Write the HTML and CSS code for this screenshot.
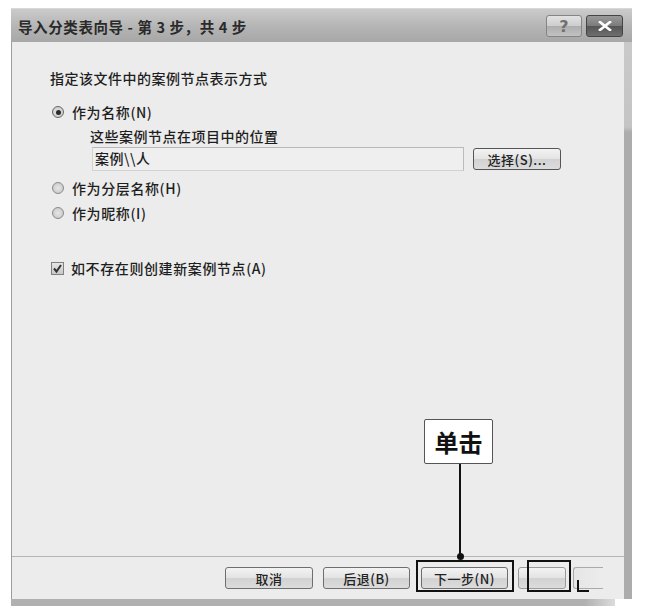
FILE: index.html
```html
<!DOCTYPE html>
<html lang="zh">
<head>
<meta charset="utf-8">
<link rel="stylesheet" href="styles.css">
</head>
<body>
<div class="window">
  <div class="titlebar">
    <span class="title">导入分类表向导 - 第 3 步，共 4 步</span>
    <div class="tbtns">
      <span class="tbtn help">?</span>
      <span class="tbtn close">
        <svg width="14" height="10" viewBox="0 0 14 10"><path d="M2 1 L12 9 M12 1 L2 9" stroke="#fff" stroke-width="2.6" stroke-linecap="square"/></svg>
      </span>
    </div>
  </div>
  <div class="frame">
    <div class="client">
      <div class="content">
        <div class="heading">指定该文件中的案例节点表示方式</div>
        <div class="opt first"><span class="radio on"></span><span>作为名称(N)</span></div>
        <div class="sublabel">这些案例节点在项目中的位置</div>
        <div class="fieldrow">
          <div class="field">案例\\人</div>
          <span class="btn sel">选择(S)...</span>
        </div>
        <div class="opt second"><span class="radio"></span><span>作为分层名称(H)</span></div>
        <div class="opt third"><span class="radio"></span><span>作为昵称(I)</span></div>
        <div class="opt check"><span class="checkbox">
          <svg width="11" height="11" viewBox="0 0 11 11"><path d="M2 5.5 L4.5 8.5 L9 2" fill="none" stroke="#333" stroke-width="2"/></svg>
        </span><span>如不存在则创建新案例节点(A)</span></div>
      </div>
      <div class="footer">
        <span class="btn">取消</span>
        <span class="btn">后退(B)</span>
        <span class="btn">下一步(N)</span>
        <span class="btn finish"></span>
        <span class="btn part"></span>
      </div>
    </div>
    <div class="rframe"></div>
  </div>
  <div class="bframe"></div>
</div>

<div class="callout">单击</div>
<div class="leader"></div>
<div class="dot"></div>
<div class="hl hl-next"></div>
<div class="hl hl-finish"></div>
<div class="corner"></div>
</body>
</html>
```

FILE: styles.css
```css
html, body {
  margin: 0;
  padding: 0;
  background: #ffffff;
}
body {
  width: 650px;
  height: 615px;
  position: relative;
  overflow: hidden;
  font-family: "Noto Sans CJK SC", "Noto Sans", sans-serif;
  color: #1e1e1e;
}
.window {
  margin: 8px 0 0 11px;
  width: 621px;
}
.titlebar {
  height: 34px;
  display: flex;
  align-items: center;
  justify-content: space-between;
  padding-left: 7px;
  background: linear-gradient(to bottom, #cbcbcb 0%, #b4b4b4 55%, #a7a7a7 100%);
  border-top: 1px solid #d8d8d8;
  box-sizing: border-box;
}
.title {
  font-size: 14.5px;
  font-weight: 700;
  color: #2a2a2a;
  letter-spacing: 0.6px;
  margin-top: 2px;
}
.tbtns {
  display: flex;
  gap: 4px;
  padding-right: 9px;
  margin-top: 1px;
}
.tbtn {
  width: 36px;
  height: 22px;
  box-sizing: border-box;
  border-radius: 3px;
  display: flex;
  align-items: center;
  justify-content: center;
}
.help {
  border: 1px solid #858585;
  background: linear-gradient(to bottom, #e2e2e2 0%, #cdcdcd 50%, #adadad 51%, #c2c2c2 100%);
  font-family: "DejaVu Sans", sans-serif;
  font-weight: 700;
  font-size: 16px;
  color: #707070;
}
.close {
  width: 37px;
  border: 1px solid #444;
  background: linear-gradient(to bottom, #9a9a9a 0%, #7a7a7a 50%, #555 51%, #6e6e6e 100%);
}
.frame {
  display: flex;
}
.client {
  width: 613px;
  background: #ececec;
  border-left: 1px solid #9c9c9c;
  box-sizing: border-box;
}
.rframe {
  width: 8px;
  background: linear-gradient(to bottom, #c9c9c9 0px, #c4c4c4 85px, #acacac 90px, #acacac 100%);
}
.content {
  height: 514px;
  padding: 26px 0 0 38px;
  box-sizing: border-box;
  font-size: 14px;
  font-weight: 500;
}
.heading {
  height: 20px;
  line-height: 20px;
  letter-spacing: 0.5px;
}
.opt {
  display: flex;
  align-items: center;
  height: 20px;
  line-height: 20px;
  letter-spacing: 0.6px;
}
.opt.first { margin-top: 14px; }
.opt.second { margin-top: 7px; }
.opt.third { margin-top: 5px; }
.opt.check { margin-top: 35px; }
.radio {
  width: 12px;
  height: 12px;
  box-sizing: border-box;
  border-radius: 50%;
  border: 1px solid #8a8a8a;
  background: radial-gradient(circle, #e6e6e6 0%, #c4c4c4 100%);
  margin: 0 8px 0 2px;
  position: relative;
  flex: none;
}
.radio.on {
  border-color: #666;
}
.radio.on::after {
  content: "";
  position: absolute;
  left: 2.5px;
  top: 2.5px;
  width: 5px;
  height: 5px;
  border-radius: 50%;
  background: #2a2a2a;
}
.checkbox {
  width: 13px;
  height: 13px;
  box-sizing: border-box;
  border: 1px solid #808080;
  background: linear-gradient(to bottom, #e6e6e6, #c8c8c8);
  margin: 0 7px 0 1px;
  display: flex;
  align-items: center;
  justify-content: center;
  flex: none;
}
.sublabel {
  margin: 4px 0 0 40px;
  height: 20px;
  line-height: 20px;
  letter-spacing: 0.5px;
}
.fieldrow {
  display: flex;
  align-items: center;
  margin: 1px 0 0 42px;
}
.field {
  width: 372px;
  height: 24px;
  box-sizing: border-box;
  border: 1px solid #d2d2d2;
  border-top-color: #b8b8b8;
  border-right-color: #bcbcbc;
  background: #efefef;
  line-height: 21px;
  padding-left: 2px;
  font-size: 14px;
  letter-spacing: 0.5px;
}
.btn {
  height: 22px;
  box-sizing: border-box;
  border: 1px solid #6e6e6e;
  border-radius: 3px;
  background: linear-gradient(to bottom, #f3f3f3 0%, #e4e4e4 48%, #d2d2d2 52%, #dcdcdc 100%);
  display: flex;
  align-items: center;
  justify-content: center;
  font-size: 13px;
  font-weight: 500;
  letter-spacing: 0.5px;
  color: #222;
  width: 87px;
  flex: none;
}
.btn.sel {
  margin-left: 9px;
  width: 88px;
  height: 22px;
  border-color: #555;
}
.footer {
  height: 43px;
  border-top: 1px solid #b4b4b4;
  box-sizing: border-box;
  display: flex;
  gap: 10px;
  padding: 10px 0 0 213px;
  overflow: hidden;
}
.footer .btn:first-child { width: 88px; }
.footer .btn:nth-child(3) { margin-left: 1px; }
.btn.finish {
  width: 48px;
  border-color: #9a9a9a;
}
.btn.part {
  width: 30px;
  margin-left: -3px;
  border-color: #aaa;
  border-right: none;
  border-radius: 3px 0 0 3px;
  background: linear-gradient(to right, #e6e6e6, #ececec);
}
.bframe {
  width: 604px;
  height: 7px;
  background: linear-gradient(to right, #b0b0b0 0%, #b0b0b0 95%, #dcdcdc 100%);
}
.callout {
  position: absolute;
  left: 424px;
  top: 419px;
  width: 69px;
  height: 45px;
  box-sizing: border-box;
  border: 1px solid #555;
  border-radius: 2px;
  background: #fff;
  font-size: 24px;
  font-weight: 700;
  color: #111;
  display: flex;
  align-items: center;
  justify-content: center;
  letter-spacing: 0;
}
.leader {
  position: absolute;
  left: 459px;
  top: 464px;
  width: 2px;
  height: 93px;
  background: #111;
}
.dot {
  position: absolute;
  left: 457px;
  top: 553px;
  width: 7px;
  height: 7px;
  border-radius: 50%;
  background: #111;
}
.hl {
  position: absolute;
  border: 2px solid #111;
  box-sizing: border-box;
  top: 560px;
  height: 32px;
}
.hl-next {
  left: 416px;
  width: 98px;
}
.hl-finish {
  left: 527px;
  width: 44px;
}
.corner {
  position: absolute;
  left: 577px;
  top: 580px;
  width: 10px;
  height: 10px;
  border-left: 2px solid #111;
  border-bottom: 2px solid #111;
}
```
